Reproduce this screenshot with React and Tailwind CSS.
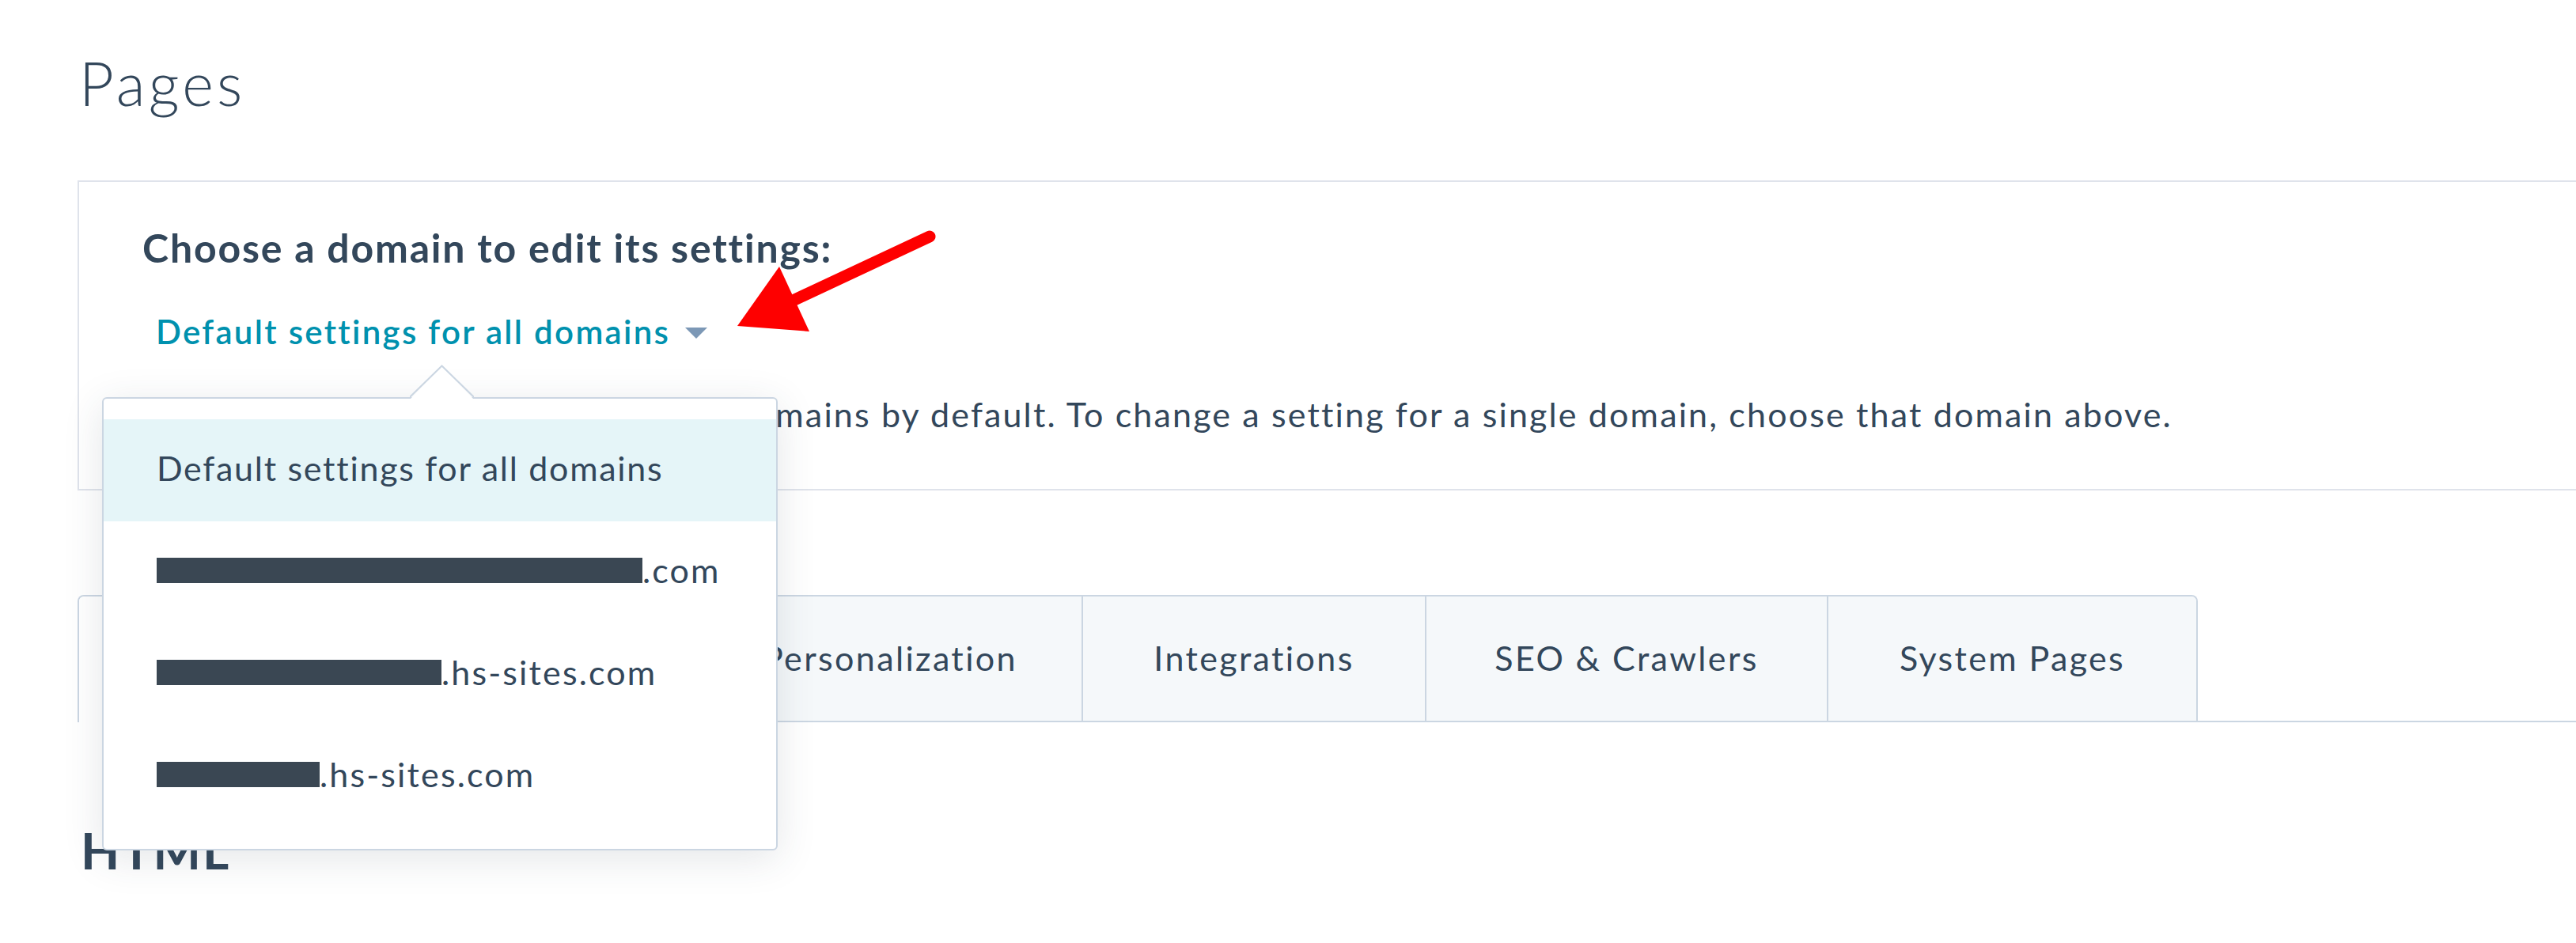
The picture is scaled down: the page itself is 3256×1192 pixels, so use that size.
import React from 'react';

const tabs = [
  { label: 'Templates', w: 'w-[400px]', active: true },
  { label: 'Branding', w: 'w-[381px]' },
  { label: 'Personalization', w: 'w-[486px]' },
  { label: 'Integrations', w: 'w-[434px]' },
  { label: 'SEO & Crawlers', w: 'w-[508px]' },
  { label: 'System Pages', w: 'w-[467px]' },
];

// redacted domains in the dropdown
const domains = [
  { hidden: 'w-[614px]', suffix: '.com' },
  { hidden: 'w-[360px]', suffix: '.hs-sites.com' },
  { hidden: 'w-[206px]', suffix: '.hs-sites.com' },
];

function DomainMenu() {
  return (
    <div className="absolute left-[129px] top-[502px] w-[854px] h-[573px] bg-white border-2 border-[#cbd6e2] rounded-md shadow-[0_10px_50px_rgba(45,62,80,0.13)] pt-[26px] text-[43px] leading-[43px] tracking-[0.05em]">
      {/* caret */}
      <svg className="absolute left-[387px] top-[-43px]" width="81" height="46" viewBox="0 0 81 46">
        <polygon points="0,44 40.5,1.5 81,44" fill="#ffffff" />
        <polyline points="0,41 40.5,1.5 81,41" fill="none" stroke="#cbd6e2" strokeWidth="2" />
      </svg>

      <div className="h-[129px] pt-[40px] pl-[67px] bg-[#e5f5f8] tracking-[0.04em]">
        Default settings for all domains
      </div>
      {domains.map((d, i) => (
        <div key={i} className="h-[129px] pt-[40px] pl-[67px]">
          <span className={`inline-block h-[32px] bg-[#3a4753] ${d.hidden}`}></span>
          {d.suffix}
        </div>
      ))}
    </div>
  );
}

function App() {
  return (
    <main className="relative min-h-screen bg-white pl-[98px] pt-[67px] overflow-hidden text-[#33475b] tracking-[0.05em] font-['Lato',sans-serif]">
      <h1 className="text-[76px] leading-[76px] font-light ml-[2px] tracking-[0.055em]">Pages</h1>

      {/* Domain chooser */}
      <section className="mt-[85px] border-l-2 border-t-2 border-b-2 border-[#dfe3eb] pl-[80px] pt-[58px] pb-[73px]">
        <h2 className="text-[50px] leading-[50px] font-bold tracking-[0.036em]">Choose a domain to edit its settings:</h2>
        <div className="mt-[60px] ml-[17px] flex items-center text-[42px] leading-[42px] font-semibold text-[#0091ae] tracking-[0.055em]">
          Default settings for all domains
          <svg className="ml-[19px] mt-[4px]" width="28" height="14" viewBox="0 0 28 14">
            <polygon points="0,0 28,0 14,14" fill="#7c98b6" />
          </svg>
        </div>
        <p className="mt-[62px] text-[43px] leading-[43px] tracking-[0.05em] whitespace-nowrap">
          These settings will be applied to all domains by default. To change a setting for a single domain, choose that domain above.
        </p>
      </section>

      {/* Tabs */}
      <div className="mt-[132px] flex border-b-2 border-[#cbd6e2]">
        <div className="flex -mb-[2px] border-2 border-b-0 border-[#cbd6e2] rounded-t-lg overflow-hidden text-[43px] tracking-[0.055em]">
          {tabs.map((t) => (
            <div
              key={t.label}
              className={
                t.active
                  ? `${t.w} h-[159px] flex items-center justify-center bg-white`
                  : `${t.w} h-[159px] flex items-center justify-center bg-[#f5f8fa] border-l-2 border-b-2 border-[#cbd6e2]`
              }
            >
              {t.label}
            </div>
          ))}
        </div>
      </div>

      <h3 className="mt-[130px] text-[64px] leading-[64px] font-bold ml-[4px] tracking-[0.03em]">HTML</h3>

      <DomainMenu />

      {/* red annotation arrow */}
      <svg className="absolute left-0 top-0 pointer-events-none" width="1300" height="500">
        <line x1="1175" y1="299" x2="1000" y2="381" stroke="#fe0000" strokeWidth="15" strokeLinecap="round" />
        <polygon points="985,337 932,412 1023,419" fill="#fe0000" />
      </svg>
    </main>
  );
}

export default App;
